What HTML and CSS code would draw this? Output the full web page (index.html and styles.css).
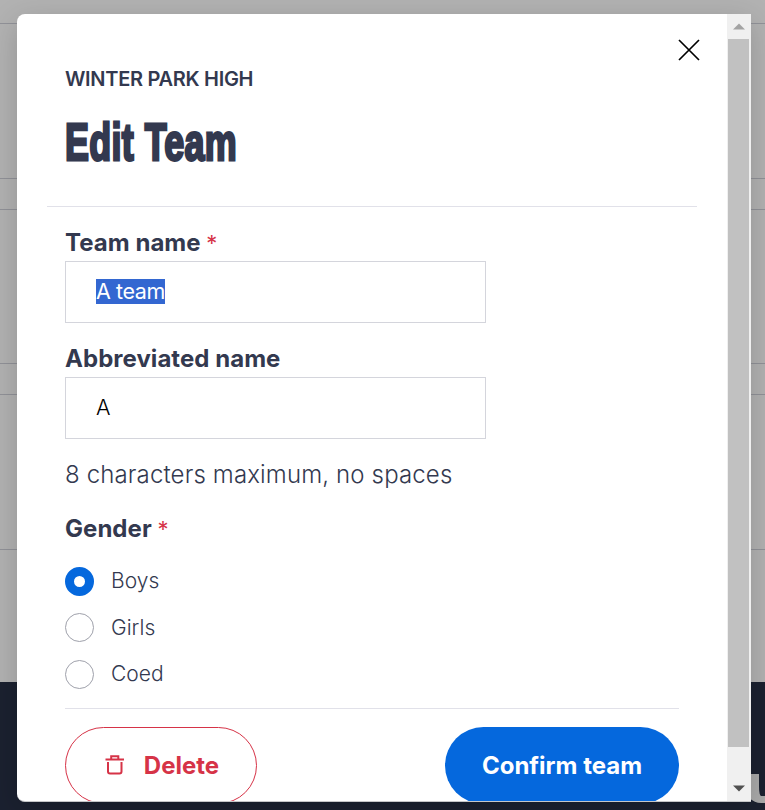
FILE: index.html
```html
<!DOCTYPE html>
<html lang="en">
<head>
<meta charset="utf-8">
<title>Edit Team</title>
<link rel="stylesheet" href="styles.css">
</head>
<body>
<div class="page">
  <div class="backdrop">
    <div class="band band-top"></div>
    <div class="band band-tall"></div>
    <div class="band band-short"></div>
    <div class="band band-mid"></div>
    <div class="band band-short"></div>
    <div class="band band-tall"></div>
    <div class="page-footer"></div>
  </div>
  <div class="chat-tab"></div>
  <main class="modal">
    <div class="content">
      <button class="close" aria-label="Close"><svg width="22" height="22" viewBox="0 0 22 22"><path d="M1 1 21 21M21 1 1 21"/></svg></button>
      <header class="header">
        <p class="school">WINTER PARK HIGH</p>
        <h1 class="title"><span>Edit Team</span></h1>
      </header>
      <form class="form">
        <div class="field">
          <div class="label">Team name <span class="required">*</span></div>
          <div class="input"><span class="selected">A team</span></div>
        </div>
        <div class="field">
          <div class="label">Abbreviated name</div>
          <div class="input"><span>A</span></div>
        </div>
        <p class="hint">8 characters maximum, no spaces</p>
        <div class="label gender">Gender <span class="required">*</span></div>
        <div class="options">
          <div class="option"><i class="radio checked"></i><span>Boys</span></div>
          <div class="option"><i class="radio"></i><span>Girls</span></div>
          <div class="option"><i class="radio"></i><span>Coed</span></div>
        </div>
        <div class="actions">
          <div class="button delete"><svg width="20" height="20" viewBox="0 0 20 20"><path d="M.5 4.5H19M6.2 4V1.2H13.3V4M3 7V16.5Q3 18.5 5 18.5H14.5Q16.5 18.5 16.5 16.5V7"/></svg><span>Delete</span></div>
          <div class="button confirm"><span>Confirm team</span></div>
        </div>
      </form>
    </div>
    <div class="scrollbar">
      <div class="arrow"><svg width="12" height="7" viewBox="0 0 12 7"><path d="M0 6.5 6 .5 12 6.5Z" fill="#a3a3a3"/></svg></div>
      <div class="thumb"></div>
      <div class="arrow arrow-down"><svg width="12" height="7" viewBox="0 0 12 7"><path d="M0 .5H12L6 6.5Z" fill="#505050"/></svg></div>
    </div>
  </main>
</div>
</body>
</html>
```
FILE: styles.css
```css
* { box-sizing: border-box; }
body { margin: 0; font-family: Inter, sans-serif; color: #33394f; }
p, h1 { margin: 0; }
.page { position: relative; width: 765px; height: 810px; overflow: hidden; padding: 14px 14px 8px 17px; }
.backdrop { position: absolute; inset: 0; display: flex; flex-direction: column; background: #b2b2b2; }
.band { flex: none; border-bottom: 1px solid #919298; }
.band-top { height: 24px; }
.band-tall { height: 155px; }
.band-mid { height: 154px; }
.band-short { height: 31px; }
.page-footer { margin-top: auto; height: 128px; background: #1b2130; }
.chat-tab { position: absolute; left: 745px; top: 774px; width: 28px; height: 29px; border: solid #aaa; border-width: 0 0 7px 14px; border-radius: 3px 0 0 16px; }
.chat-tab::before { content: ""; position: absolute; left: -14px; top: 0; width: 14px; height: 20px; border-radius: 0 3px 0 0; background: #aaa; }
.modal { position: relative; height: 788px; display: flex; background: #fff; border-radius: 8px 0 0 8px; overflow: hidden; box-shadow: 0 8px 30px rgba(0,0,0,.18); border-bottom: 1px solid #c5c6c8; }
.content { position: relative; width: 710px; padding: 0 30px; }
.close { position: absolute; left: 661px; top: 25px; padding: 0; border: 0; background: none; line-height: 0; }
.close path { stroke: #000; stroke-width: 1.7; fill: none; }
.header { height: 193px; padding: 53px 18px 0; border-bottom: 1px solid #e1e1e9; }
.school { font-size: 20px; line-height: 24px; font-weight: 600; letter-spacing: -.29px; white-space: nowrap; }
.title { margin-top: 20px; font: bold 52px/62px "Liberation Sans Narrow", "Liberation Sans", sans-serif; }
.title span { display: inline-block; transform-origin: left; transform: scaleX(.69); letter-spacing: .4px; word-spacing: 1px; -webkit-text-stroke: 2.8px #33394f; white-space: nowrap; }
.form { padding: 21px 18px 0; }
.field { margin-bottom: 21px; }
.label { height: 33px; font-size: 24px; line-height: 30px; font-weight: 700; letter-spacing: .04px; white-space: nowrap; }
.required { color: #d63347; font-weight: 400; font-size: 22px; }
.input { width: 421px; height: 62px; border: 1px solid #d4d5dc; padding: 17px 30px; font-size: 21.5px; line-height: 25px; font-weight: 300; letter-spacing: -.4px; color: #000; }
.input span { display: inline-block; height: 25px; }
.input .selected { background: #3367d1; color: #fff; font-weight: 400; }
.hint { font-size: 24px; line-height: 30px; font-weight: 300; letter-spacing: .14px; white-space: nowrap; }
.gender { margin-top: 24px; height: 30px; }
.options { display: flex; flex-direction: column; gap: 18px; margin-top: 23px; }
.option { display: flex; align-items: center; gap: 17px; height: 28.67px; font-size: 21px; font-weight: 300; letter-spacing: .05px; }
.option span { margin-top: -1.4px; }
.radio { width: 29px; height: 29px; border: 1px solid #9fa1ab; border-radius: 50%; }
.radio.checked { border: 9px solid #0568dd; }
.actions { display: flex; justify-content: space-between; margin-top: 19px; padding-top: 18px; border-top: 1px solid #e1e1e9; width: 614px; }
.button { display: flex; align-items: center; justify-content: center; height: 77px; border-radius: 39px; font-size: 24px; font-weight: 700; letter-spacing: 0; white-space: nowrap; }
.delete { width: 192px; gap: 19px; padding-left: 2px; border: 1px solid #d63347; color: #d63347; }
.delete path { fill: none; stroke: currentColor; stroke-width: 2; }
.confirm { width: 234px; background: #0568dd; color: #fff; }
.scrollbar { width: 24px; background: #f0f0f0; display: flex; flex-direction: column; }
.arrow { height: 25px; display: flex; align-items: center; justify-content: center; }
.thumb { height: 708px; margin: 0 2px 0 1px; background: #c1c1c1; }
.arrow-down { height: 54px; padding-top: 29px; }
```
